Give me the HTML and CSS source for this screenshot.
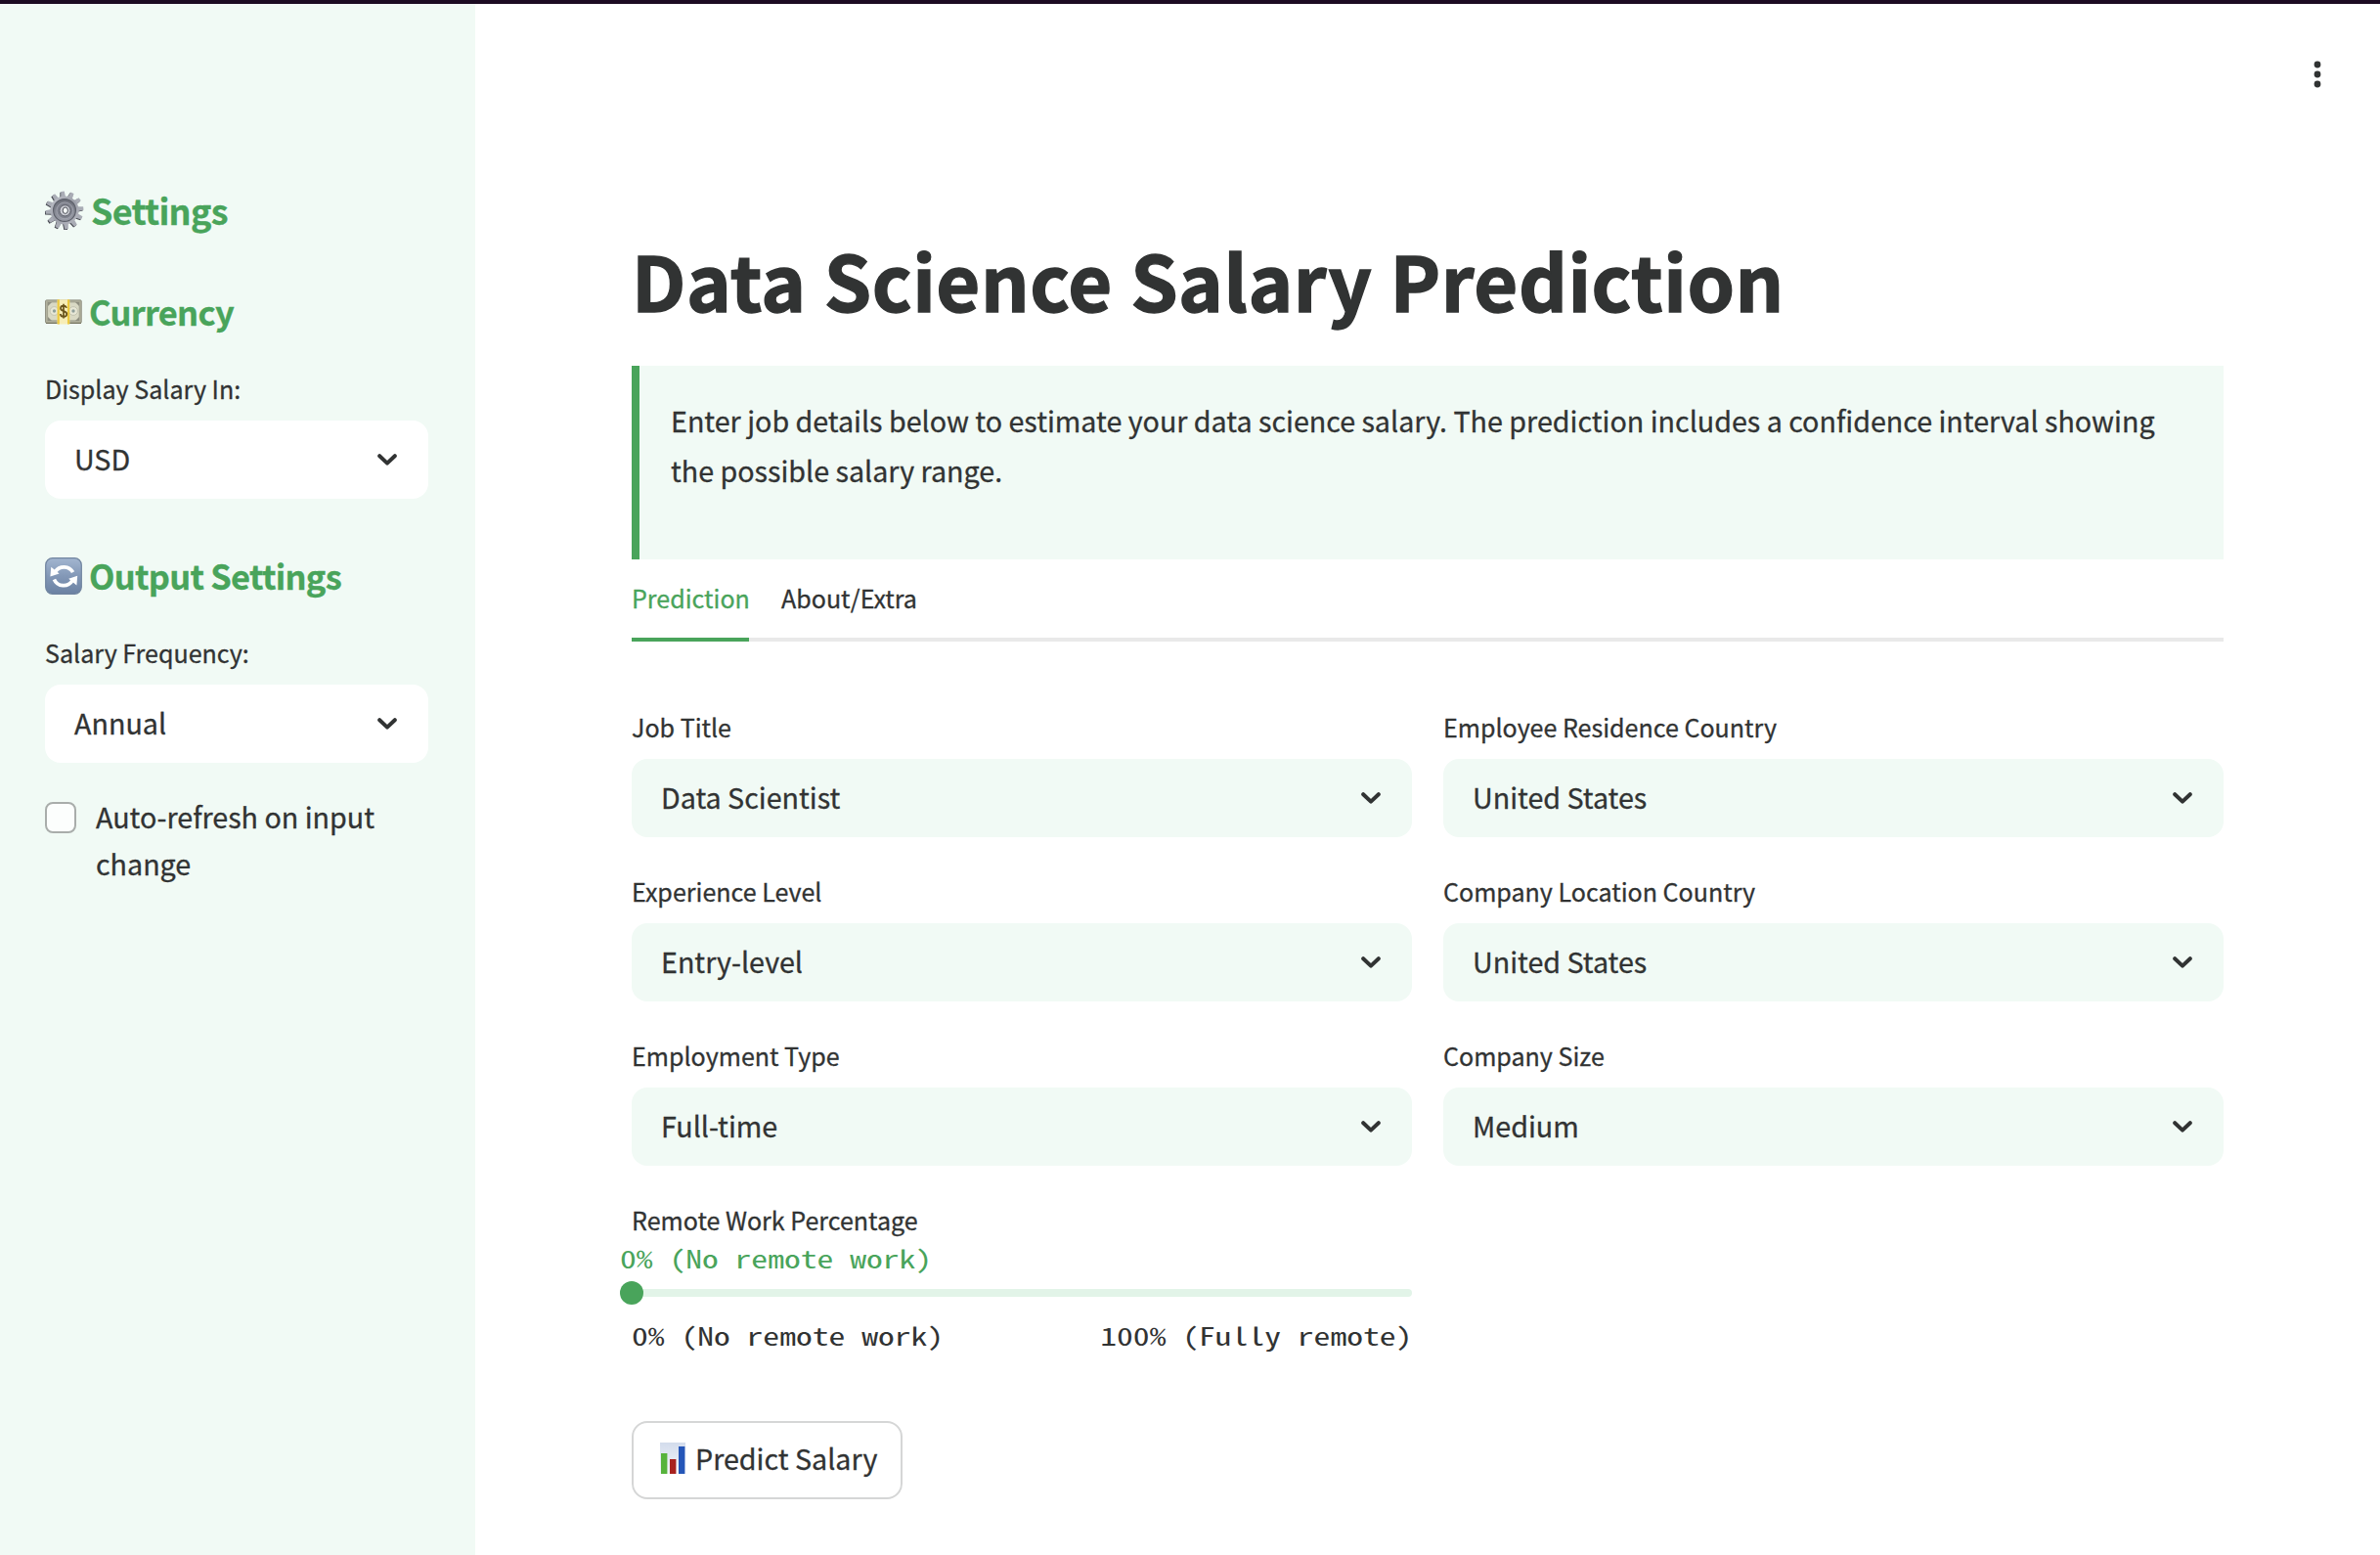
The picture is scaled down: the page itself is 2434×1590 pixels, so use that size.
FILE: index.html
```html
<!DOCTYPE html>
<html lang="en">
<head>
<meta charset="utf-8">
<title>Data Science Salary Prediction</title>
<link rel="stylesheet" href="styles.css">
</head>
<body>
<svg width="0" height="0" class="defs" aria-hidden="true">
  <symbol id="chevron" viewBox="0 0 20 12"><path d="M2.2 2.2 10 9.6 17.8 2.2" fill="none" stroke="currentColor" stroke-width="4" stroke-linecap="round" stroke-linejoin="round"/></symbol>
</svg>
<div class="strip"></div>
<div class="app">
  <aside class="sidebar">
    <h2 class="side-title gear-title">
      <svg class="emoji gear" viewBox="0 0 40 40">
        <defs>
          <linearGradient id="gm" x1="0" y1="0" x2="1" y2="1"><stop offset="0" stop-color="#c3c5cc"/><stop offset=".5" stop-color="#9b9ea8"/><stop offset="1" stop-color="#b9bbc3"/></linearGradient>
          <linearGradient id="gr" x1="0" y1="0" x2="0" y2="1"><stop offset="0" stop-color="#6a6d77"/><stop offset="1" stop-color="#9a9da8"/></linearGradient>
          <g id="teeth"><path id="t" d="M17.4 8 18.2.6h3.6L22.6 8z"/><use href="#t" transform="rotate(30 20 20)"/><use href="#t" transform="rotate(60 20 20)"/><use href="#t" transform="rotate(90 20 20)"/><use href="#t" transform="rotate(120 20 20)"/><use href="#t" transform="rotate(150 20 20)"/><use href="#t" transform="rotate(180 20 20)"/><use href="#t" transform="rotate(210 20 20)"/><use href="#t" transform="rotate(240 20 20)"/><use href="#t" transform="rotate(270 20 20)"/><use href="#t" transform="rotate(300 20 20)"/><use href="#t" transform="rotate(330 20 20)"/></g>
        </defs>
        <g transform="rotate(-6 20 20)"><use href="#teeth" x="-.9" y=".7" fill="#44464e"/><use href="#teeth" fill="#a9acb5"/></g>
        <circle cx="20" cy="20" r="14.6" fill="url(#gm)"/>
        <circle cx="20" cy="20" r="11.4" fill="url(#gr)" stroke="#5d606a" stroke-width="1.2"/>
        <circle cx="20.3" cy="20.3" r="8.4" fill="#80838e" stroke="#a7aab4" stroke-width=".8"/>
        <circle cx="20.5" cy="20.3" r="5.6" fill="#c9cbd2" stroke="#5b5e68" stroke-width="1"/>
        <ellipse cx="20.8" cy="20.2" rx="2.6" ry="3.2" fill="#f6fbf9" stroke="#4c4e57" stroke-width="1"/>
      </svg>Settings</h2>
    <h2 class="side-title small">
      <svg class="emoji" viewBox="0 0 38 38">
        <rect x=".6" y="6.9" width="36.6" height="23.4" rx="1" fill="#b5b5a0" stroke="#8c8c7d" stroke-width="1"/>
        <rect x="2.6" y="8.9" width="32.6" height="19" fill="#d9d9c4" stroke="#a0a08f" stroke-width="1"/>
        <path d="M3 9h4l-4 4zM35 9h-4l4 4zM3 28v-4l4 4zM35 28v-4l-4 4z" fill="#8f8f80"/>
        <circle cx="9.5" cy="18" r="4.4" fill="#e7e7d6" stroke="#bcbca9" stroke-width=".8"/><circle cx="29" cy="18" r="4.4" fill="#e7e7d6" stroke="#bcbca9" stroke-width=".8"/>
        <circle cx="9.5" cy="18" r="1.7" fill="#90a09b"/><circle cx="29" cy="18" r="1.7" fill="#90a09b"/>
        <path d="M1 30.4h36" stroke="#6f6d58" stroke-width="1"/>
        <rect x="12.6" y="6.2" width="12.6" height="25.2" rx=".8" fill="#f7edb6"/>
        <path d="M12.6 6.2h2.2v25.2h-2.2zM23 6.2h2.2v25.2H23z" fill="#ecc93f"/>
        <path d="M22 14.9c-.4-1.6-1.5-2.3-3-2.3-1.8 0-3 1-3 2.6 0 3.6 6.3 2.2 6.3 5.8 0 1.7-1.4 2.8-3.2 2.8s-3.1-1-3.4-2.8M19 10.8v14.8" fill="none" stroke="#69531b" stroke-width="1.7"/>
      </svg>Currency</h2>
    <label class="label">Display Salary In:</label>
    <div class="select white">USD<svg class="chev"><use href="#chevron"/></svg></div>
    <h2 class="side-title small second">
      <svg class="emoji" viewBox="0 0 38 38">
        <defs><linearGradient id="rb" x1="0" y1="0" x2="0" y2="1"><stop offset="0" stop-color="#a3b6d0"/><stop offset=".5" stop-color="#8398b7"/><stop offset="1" stop-color="#6b81a2"/></linearGradient></defs>
        <rect x=".7" y=".7" width="36.6" height="36.6" rx="7" fill="url(#rb)" stroke="#70849f" stroke-width="1.2"/>
        <path d="M28.6 15.2A10.6 10.6 0 0 0 10.6 14.4M9.4 22.4A10.6 10.6 0 0 0 28 23.8" fill="none" stroke="#fff" stroke-width="3.7"/>
        <path d="M5.4 19.4 6.3 9.8 14.6 16.6zM33.2 18.7 32.4 28.6 24.2 21.7z" fill="#fff"/>
      </svg>Output Settings</h2>
    <label class="label">Salary Frequency:</label>
    <div class="select white">Annual<svg class="chev"><use href="#chevron"/></svg></div>
    <div class="check"><span class="box"></span><span class="check-text">Auto-refresh on input change</span></div>
  </aside>
  <main class="main">
    <svg class="menu" viewBox="0 0 8 28"><circle cx="4" cy="4" r="3.4"/><circle cx="4" cy="14" r="3.4"/><circle cx="4" cy="24" r="3.4"/></svg>
    <h1 class="title">Data Science Salary Prediction</h1>
    <div class="intro">Enter job details below to estimate your data science salary. The prediction includes a confidence interval showing the possible salary range.</div>
    <nav class="tabs"><span class="tab active">Prediction</span><span class="tab">About/Extra</span></nav>
    <div class="form">
      <div class="col">
        <div class="field"><label class="label">Job Title</label><div class="select">Data Scientist<svg class="chev"><use href="#chevron"/></svg></div></div>
        <div class="field"><label class="label">Experience Level</label><div class="select">Entry-level<svg class="chev"><use href="#chevron"/></svg></div></div>
        <div class="field"><label class="label">Employment Type</label><div class="select">Full-time<svg class="chev"><use href="#chevron"/></svg></div></div>
        <div class="field">
          <label class="label">Remote Work Percentage</label>
          <div class="slider"><span class="value mono">0% (No remote work)</span><span class="thumb"></span></div>
          <div class="ticks"><span class="mono">0% (No remote work)</span><span class="mono end">100% (Fully remote)</span></div>
        </div>
      </div>
      <div class="col">
        <div class="field"><label class="label">Employee Residence Country</label><div class="select">United States<svg class="chev"><use href="#chevron"/></svg></div></div>
        <div class="field"><label class="label">Company Location Country</label><div class="select">United States<svg class="chev"><use href="#chevron"/></svg></div></div>
        <div class="field"><label class="label">Company Size</label><div class="select">Medium<svg class="chev"><use href="#chevron"/></svg></div></div>
      </div>
    </div>
    <button class="predict">
      <svg class="bars" viewBox="0 0 26 32">
        <defs><linearGradient id="bg" x1="0" y1="0" x2="0" y2="1"><stop offset="0" stop-color="#d3dcec"/><stop offset="1" stop-color="#f4f6fa"/></linearGradient></defs>
        <rect width="26" height="32" fill="url(#bg)"/>
        <rect x="1" y="11" width="6.4" height="21" fill="#57b33c"/><rect x="10" y="17" width="6.4" height="15" fill="#a8221f"/><rect x="19" y="4" width="6.4" height="28" fill="#2556b8"/>
      </svg>Predict Salary</button>
  </main>
</div>
</body>
</html>
```
FILE: styles.css
```css
* { box-sizing: border-box; }

body {
  margin: 0;
  width: 2434px;
  height: 1590px;
  overflow: hidden;
  background: #fff;
  color: #313333;
  font-family: "Noto Sans CJK SC", "Noto Sans", sans-serif;
  font-size: 28.66px;
  -webkit-text-stroke: .3px currentColor;
}

.defs { display: none; }
.strip { height: 4px; background: #1c0b22; }
.app { display: flex; height: 1586px; }

.sidebar {
  width: 486px;
  flex: none;
  padding: 186px 48px 0 46px;
  background: #f1faf5;
}

.side-title {
  display: flex;
  gap: 7px;
  height: 48px;
  margin: 0 0 36px;
  font-size: 35.9px;
  line-height: 48px;
  font-weight: 700;
  letter-spacing: -.7px;
  color: #49a45b;
  white-space: nowrap;
}
.side-title.small { font-size: 34.4px; line-height: 51px; }
.side-title.gear-title { margin-bottom: 55px; }
.side-title.second { margin-top: 53px; }
.emoji { width: 38px; height: 38px; margin-top: 7px; flex: none; }
.gear { width: 40px; height: 40px; margin-top: 5px; }

.label {
  display: block;
  height: 40px;
  margin-bottom: 13px;
  font-size: 25.05px;
  line-height: 40px;
  white-space: nowrap;
}

.select {
  display: flex;
  align-items: center;
  justify-content: space-between;
  height: 80px;
  padding: 0 32px 3px 30px;
  border-radius: 16px;
  background: #f1faf5;
}
.select.white { background: #fff; }
.chev { width: 20px; height: 12px; margin-top: 3px; }

.check { display: flex; gap: 20px; margin-top: 31px; line-height: 48px; }
.box {
  flex: none;
  width: 32px;
  height: 32px;
  margin-top: 9px;
  border: 2px solid #a9adab;
  border-radius: 8px;
  background: #fcfefd;
}

.main {
  position: relative;
  flex: 1;
  padding: 228px 160px 0;
}
.menu { position: absolute; top: 58px; right: 60px; width: 8px; height: 28px; fill: #313333; }

.title {
  height: 106px;
  margin: 0 0 36px;
  font-size: 77.6px;
  line-height: 106px;
  font-weight: 700;
  letter-spacing: .54px;
  -webkit-text-stroke: 1.4px currentColor;
  white-space: nowrap;
}

.intro {
  height: 198px;
  padding: 30px 32px;
  border-left: 8px solid #49a45b;
  background: #f1faf5;
  line-height: 51.2px;
}

.tabs {
  display: flex;
  gap: 33px;
  height: 84px;
  padding-top: 19px;
  border-bottom: 4px solid #e9e9e9;
  font-size: 25.05px;
  line-height: 40px;
}
.tab { height: 65px; }
.tab.active { width: 120px; color: #49a45b; border-bottom: 4px solid #49a45b; white-space: nowrap; }

.form { display: grid; grid-template-columns: 1fr 1fr; gap: 32px; margin-top: 67px; }
.col { display: flex; flex-direction: column; gap: 35px; }

/* widened so each character advances 16.8px */
.mono {
  font-family: "Noto Sans Mono CJK SC", "DejaVu Sans Mono", monospace;
  font-size: 25.1px;
  line-height: 40px;
  white-space: pre;
  transform: scaleX(1.3386);
  transform-origin: left;
  -webkit-text-stroke: 0;
}
.mono.end { transform-origin: right; }
.slider { position: relative; height: 8px; margin-top: 51px; border-radius: 4px; background: #e2f4e8; }
.thumb { position: absolute; left: -12px; top: -8px; width: 24px; height: 24px; border-radius: 50%; background: #49a45b; }
.value { position: absolute; left: -12px; bottom: 20px; color: #49a45b; }
.ticks { display: flex; justify-content: space-between; margin-top: 19px; }

.predict {
  display: flex;
  align-items: center;
  gap: 10px;
  width: 277px;
  height: 80px;
  margin-top: 68px;
  padding: 0 0 5px 27px;
  border: 2px solid #d5d6d6;
  border-radius: 16px;
  background: #fff;
  color: inherit;
  font: inherit;
  white-space: nowrap;
}
.bars { width: 26px; height: 32px; }
```
